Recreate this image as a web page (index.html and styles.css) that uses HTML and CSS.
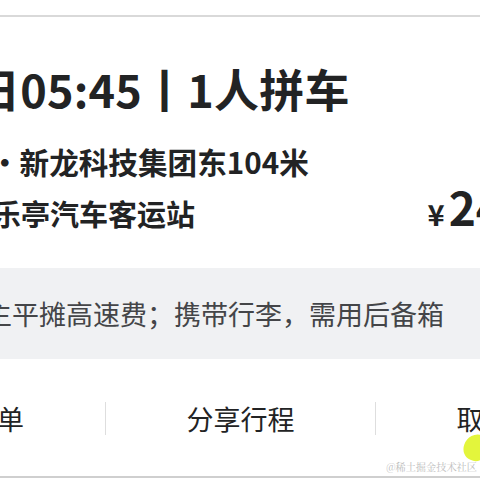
FILE: index.html
```html
<!DOCTYPE html>
<html lang="zh-CN">
<head>
<meta charset="utf-8">
<title>行程卡片</title>
<link rel="stylesheet" href="styles.css">
</head>
<body>
<div class="page">
  <div class="rule"></div>
  <section class="trip">
    <h1 class="title">日05:45丨1人拼车</h1>
    <p class="from">·新龙科技集团东104米</p>
    <div class="to-row">
      <p class="to">乐亭汽车客运站</p>
      <p class="price"><span class="yen">¥</span><span class="amount">24</span></p>
    </div>
  </section>
  <div class="note">主平摊高速费；携带行李，需用后备箱</div>
  <nav class="actions">
    <div class="action">查看订单</div>
    <div class="action divided">分享行程</div>
    <div class="action divided">取消订单</div>
  </nav>
  <div class="watermark">@稀土掘金技术社区</div>
  <div class="rule bottom"></div>
  <div class="blob"></div>
</div>
</body>
</html>
```
FILE: styles.css
```css
html, body {
  margin: 0;
  padding: 0;
  background: #ffffff;
}
body {
  font-family: "Noto Sans CJK SC", "Noto Sans", sans-serif;
  color: #222324;
}
.page {
  position: relative;
  width: 480px;
  height: 480px;
  overflow: hidden;
  background: #ffffff;
}
.rule {
  margin-top: 15px;
  height: 2px;
  background: #d9d9d9;
}
.trip {
  padding-top: 49px;
}
.title {
  margin: 0;
  font-size: 45px;
  line-height: 45px;
  font-weight: 700;
  text-indent: -25px;
  letter-spacing: 0.2px;
  white-space: nowrap;
}
.from {
  margin: 36px 0 0;
  font-size: 29.6px;
  line-height: 30px;
  font-weight: 700;
  text-indent: -10px;
  white-space: nowrap;
}
.to-row {
  display: flex;
  justify-content: space-between;
  align-items: baseline;
  margin-top: 14px;
  width: 503px;
}
.to {
  margin: 0;
  font-size: 29px;
  line-height: 30px;
  font-weight: 700;
  text-indent: -8px;
  white-space: nowrap;
}
.price {
  margin: 0;
  font-weight: 700;
  white-space: nowrap;
  line-height: 30px;
}
.yen {
  font-size: 29px;
  margin-right: 4px;
}
.amount {
  font-size: 46px;
}
.note {
  margin-top: 34px;
  height: 91px;
  display: flex;
  align-items: center;
  background: #f0f1f3;
  color: #444548;
  font-size: 27px;
  text-indent: -15px;
  white-space: nowrap;
}
.actions {
  display: grid;
  grid-template-columns: 270px 270px 270px;
  width: 810px;
  margin-left: -165px;
  margin-top: 43px;
}
.action {
  height: 33px;
  line-height: 33px;
  text-align: center;
  font-size: 27px;
  color: #222324;
}
.divided {
  border-left: 1px solid #dedede;
}
.watermark {
  margin-top: 26px;
  padding-right: 3px;
  text-align: right;
  font-family: "Noto Serif CJK SC", "Noto Sans CJK SC", serif;
  font-size: 10.2px;
  line-height: 12px;
  color: #bdbdbd;
}
.rule.bottom {
  margin-top: 3px;
  background: #cfcfcf;
}
.blob {
  position: absolute;
  left: 464px;
  top: 434px;
  width: 24px;
  height: 27px;
  background: #e3f53c;
  border-radius: 60% 40% 50% 50%;
  transform: rotate(20deg);
}
```
